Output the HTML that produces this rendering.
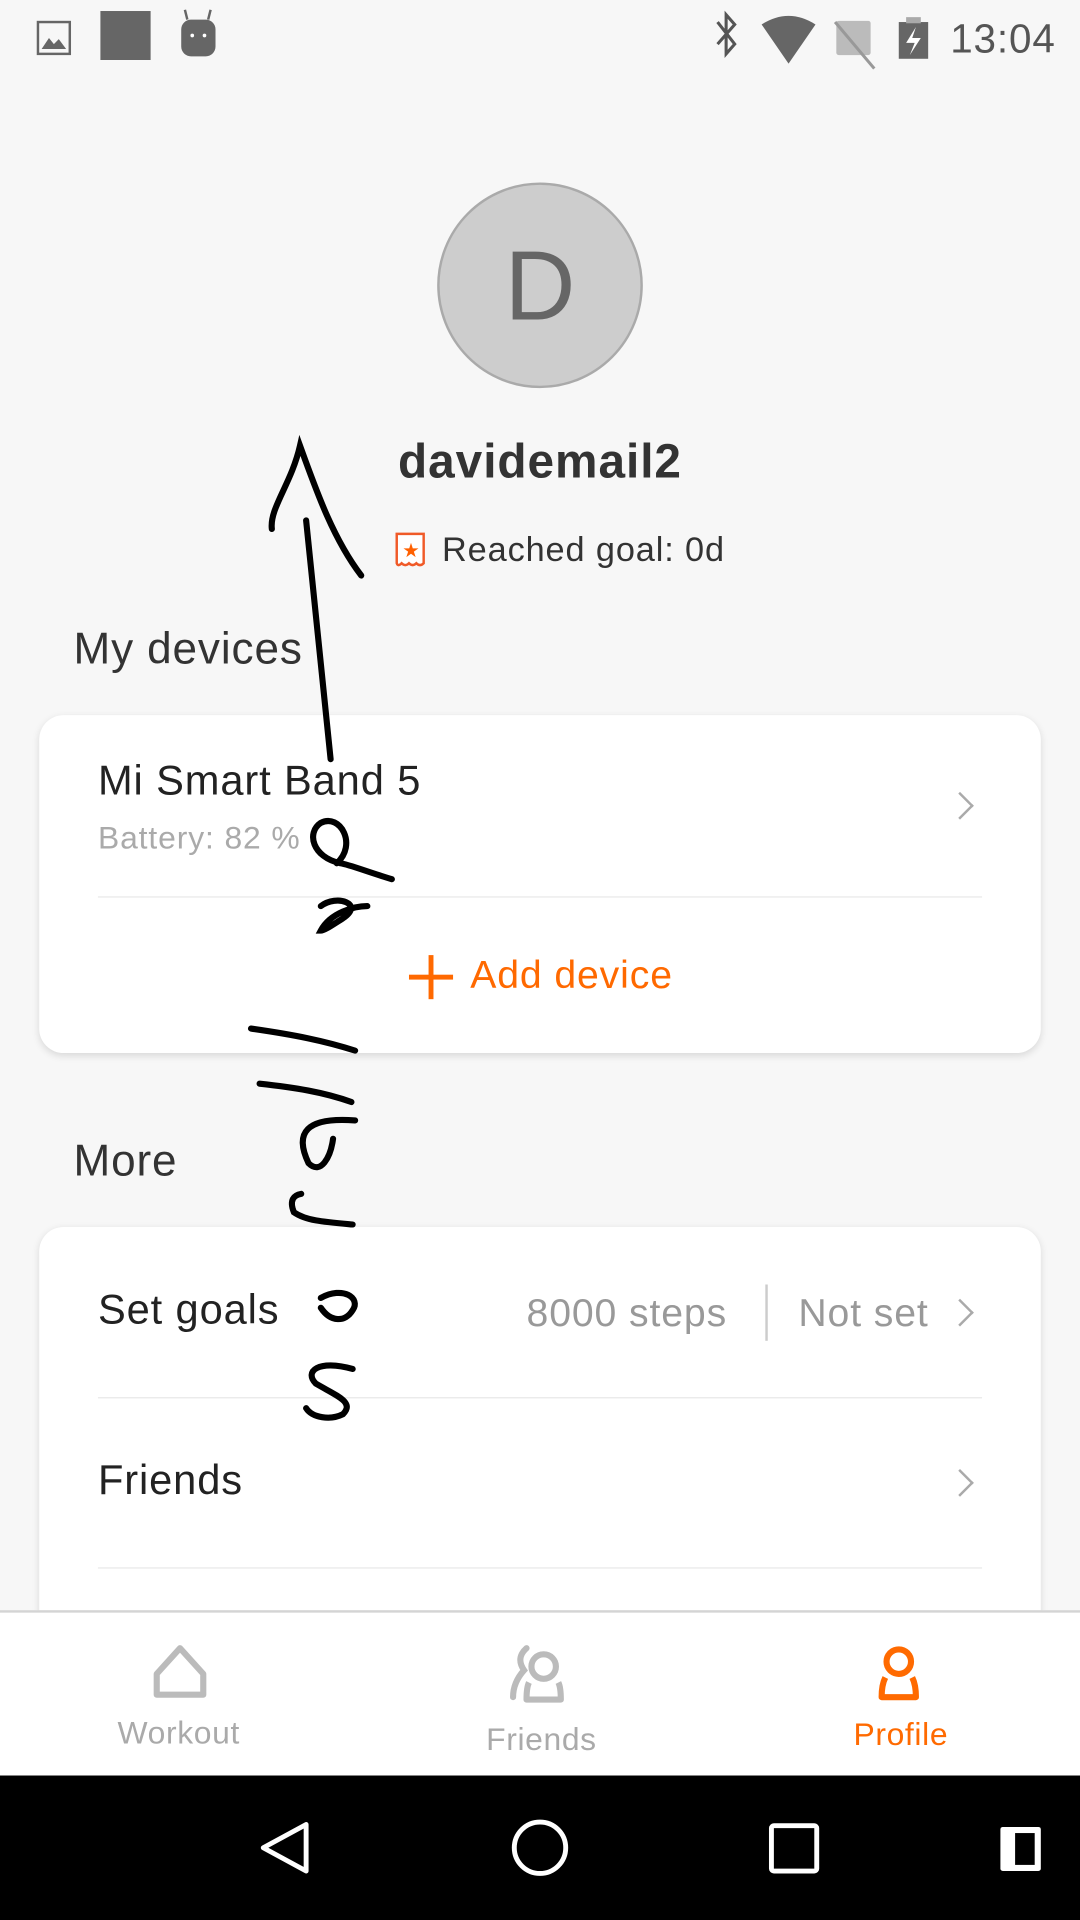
<!DOCTYPE html>
<html><head><meta charset="utf-8"><style>
*{margin:0;padding:0;box-sizing:border-box}
html,body{width:1080px;height:1920px;overflow:hidden;background:#f7f7f7}
#w{position:absolute;left:0;top:0;width:882px;height:1568px;transform:scale(1.22449);transform-origin:0 0;font-family:"Liberation Sans",sans-serif;background:#f7f7f7;letter-spacing:0.045em}
.a{position:absolute;white-space:nowrap}
.card{position:absolute;left:32px;width:818px;background:#fff;border-radius:20px;box-shadow:0 2px 6px rgba(0,0,0,.12)}
.hr{position:absolute;left:80px;width:722px;height:1px;background:#e8e8e8}
.chev{position:absolute;width:16px;height:16px;border-right:2.5px solid #aaa;border-top:2.5px solid #aaa;transform:rotate(45deg)}
</style></head><body><div id="w">
<svg class="a" style="left:0;top:0" width="882" height="60">
<rect x="31" y="18" width="26" height="26" fill="none" stroke="#666" stroke-width="2"/><path d="M34 40 L40 31 L44 36 L48 32 L54 40Z" fill="#666"/>
<rect x="82" y="9" width="41" height="40" fill="#666"/>
<rect x="148" y="16" width="28" height="30" rx="8" fill="#666"/><line x1="153" y1="16" x2="151" y2="8" stroke="#666" stroke-width="2"/><line x1="170" y1="16" x2="172" y2="8" stroke="#666" stroke-width="2"/><circle cx="157" cy="29" r="1.5" fill="#fff"/><circle cx="167" cy="29" r="1.5" fill="#fff"/>
<path d="M586 18 L600 36 L593 44 L593 12 L600 20 L586 36" fill="none" stroke="#555" stroke-width="2.5"/>
<path d="M622 20 Q644 6 666 20 L644 52Z" fill="#666"/>
<rect x="683" y="17" width="28" height="28" rx="2" fill="#bbb"/><line x1="682" y1="18" x2="714" y2="56" stroke="#999" stroke-width="2.5"/>
<rect x="734" y="18" width="24" height="30" fill="#666"/><rect x="740" y="14" width="12" height="5" fill="#aaa"/><path d="M748 22 L740 35 L747 35 L743 45 L752 31 L745 31Z" fill="#fff"/>
<text x="776" y="43" font-size="33" fill="#555" font-family="Liberation Sans">13:04</text>
</svg>
<div class="a" style="left:357px;top:149px;width:168px;height:168px;border-radius:50%;background:#cdcdcd;border:2px solid #aaa"></div>
<div class="a" style="left:357px;top:188px;width:168px;text-align:center;font-size:80px;color:#666;letter-spacing:0">D</div>
<div class="a" style="left:0;width:882px;top:356px;text-align:center;font-size:39px;font-weight:bold;color:#333;letter-spacing:0.02em">davidemail2</div>
<svg class="a" style="left:322px;top:434px" width="28" height="32"><path d="M2 2 H24 V26 Q21 29 18 26 Q15 29 12 26 Q9 29 6 26 Q3 29 2 26Z" fill="#fff" stroke="#f05a28" stroke-width="2"/><text x="6.5" y="21" font-size="16" fill="#ff6000">★</text></svg>
<div class="a" style="left:361px;top:433px;font-size:28px;color:#333">Reached goal: 0d</div>
<div class="a" style="left:60px;top:509px;font-size:36px;color:#333">My devices</div>
<div class="card" style="top:584px;height:276px"></div>
<div class="a" style="left:80px;top:619px;font-size:34px;color:#222">Mi Smart Band 5</div>
<div class="a" style="left:80px;top:669px;font-size:26px;color:#aaa">Battery: 82 %</div>
<div class="chev" style="left:776px;top:650px"></div>
<div class="hr" style="top:732px"></div>
<div class="a" style="left:334px;top:780px;width:36px;height:36px">
<div style="position:absolute;left:16px;top:0;width:4px;height:36px;background:#ff6900"></div>
<div style="position:absolute;left:0;top:16px;width:36px;height:4px;background:#ff6900"></div></div>
<div class="a" style="left:384px;top:778px;font-size:32px;color:#ff6900">Add device</div>
<div class="a" style="left:60px;top:927px;font-size:36px;color:#333">More</div>
<div class="card" style="top:1002px;height:340px"></div>
<div class="a" style="left:80px;top:1051px;font-size:34px;color:#222">Set goals</div>
<div class="a" style="left:430px;top:1054px;font-size:32px;color:#999">8000 steps</div>
<div class="a" style="left:625px;top:1049px;width:2px;height:46px;background:#ccc"></div>
<div class="a" style="left:652px;top:1054px;font-size:32px;color:#999">Not set</div>
<div class="chev" style="left:776px;top:1064px"></div>
<div class="hr" style="top:1141px"></div>
<div class="a" style="left:80px;top:1190px;font-size:34px;color:#222">Friends</div>
<div class="chev" style="left:776px;top:1203px"></div>
<div class="hr" style="top:1280px"></div>
<div class="a" style="left:0;top:1315px;width:882px;height:135px;background:#fff;border-top:2px solid #d4d4d4"></div>
<svg class="a" style="left:0;top:1340px" width="882" height="70">
<path d="M128 44 V27 L147 6 L166 27 V44 Z" fill="none" stroke="#bbb" stroke-width="5" stroke-linejoin="round"/>
<circle cx="444" cy="21" r="10" fill="none" stroke="#bbb" stroke-width="5"/><path d="M432 34 Q430 38 430 48 H458 Q458 38 456 34" fill="none" stroke="#bbb" stroke-width="5" stroke-linejoin="round"/><path d="M430 6 Q421 14 428 24 Q419 34 419 46" fill="none" stroke="#bbb" stroke-width="5" stroke-linecap="round"/>
<circle cx="734" cy="17" r="10" fill="none" stroke="#ff6a00" stroke-width="5"/><path d="M723 30 Q720 36 720 46 H748 Q748 36 745 30" fill="none" stroke="#ff6a00" stroke-width="5" stroke-linejoin="round"/>
</svg>
<div class="a" style="left:96px;top:1400px;font-size:26px;color:#aaa;letter-spacing:0.02em">Workout</div>
<div class="a" style="left:397px;top:1405px;font-size:26px;color:#aaa;letter-spacing:0.02em">Friends</div>
<div class="a" style="left:697px;top:1401px;font-size:26px;color:#ff6a00;letter-spacing:0.02em">Profile</div>
<div class="a" style="left:0;top:1450px;width:882px;height:118px;background:#000"></div>
<svg class="a" style="left:0;top:1450px" width="882" height="118">
<path d="M250 40 L215 59 L250 78Z" fill="none" stroke="#fff" stroke-width="4" stroke-linejoin="round"/>
<circle cx="441" cy="59" r="21" fill="none" stroke="#fff" stroke-width="4"/>
<rect x="630" y="41" width="37" height="37" rx="2" fill="none" stroke="#fff" stroke-width="4"/>
<rect x="817" y="42" width="33" height="36" rx="2" fill="#fff"/><rect x="829" y="47" width="16" height="26" fill="#000"/>
</svg>
<svg class="a" style="left:0;top:0" width="882" height="1568" fill="none" stroke="#000" stroke-width="5" stroke-linecap="round">
<path d="M222 432 C220 415 238 395 245 364 C258 400 272 440 295 470"/>
<path d="M250 425 C258 500 264 560 270 620"/>
<path d="M320 718 C300 712 285 706 278 705 C255 700 250 680 262 672 C278 664 292 690 275 705"/>
<path d="M262 740 C275 730 298 738 280 750 C272 755 265 760 262 760 C270 745 290 740 300 740"/>
<path d="M205 840 C240 845 265 850 290 858"/>
<path d="M212 885 C240 888 265 892 287 900"/>
<path d="M290 915 C250 912 240 925 252 950 C262 960 270 945 272 930"/>
<path d="M288 1000 C265 998 250 997 240 990 C236 980 240 976 246 975"/>
<path d="M262 1060 C280 1050 295 1060 288 1070 C282 1080 270 1080 262 1068"/>
<path d="M288 1118 C260 1110 248 1120 258 1130 C275 1140 290 1145 280 1155 C270 1160 255 1158 250 1150"/>
</svg>
</div></body></html>
